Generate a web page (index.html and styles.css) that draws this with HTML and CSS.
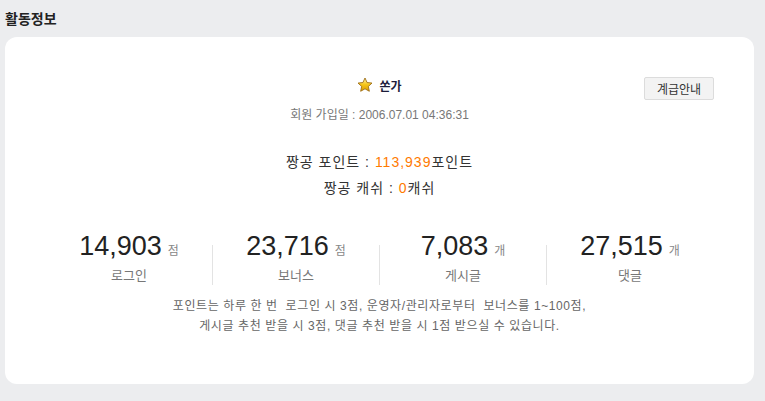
FILE: index.html
```html
<!DOCTYPE html>
<html lang="ko">
<head>
  <meta charset="UTF-8">
  <meta name="viewport" content="width=device-width, initial-scale=1.0">
  <title>활동정보</title>
  <link rel="stylesheet" href="styles.css">
</head>
<body>
  <h2 class="title">활동정보</h2>
  <div class="card">
    <button class="grade-btn" type="button">계급안내</button>
    <div class="name-row">
      <svg class="star" width="16" height="16" viewBox="0 0 24 24">
        <defs>
          <linearGradient id="g" x1="0" y1="0" x2="0" y2="1">
            <stop offset="0" stop-color="#fff6b0"/>
            <stop offset="0.5" stop-color="#f5c518"/>
            <stop offset="1" stop-color="#d99a00"/>
          </linearGradient>
        </defs>
        <path d="M12 1.5l3.1 6.8 7.4.8-5.5 5 1.5 7.3L12 17.7l-6.5 3.7 1.5-7.3-5.5-5 7.4-.8z" fill="url(#g)" stroke="#9a6a10" stroke-width="1.3" stroke-linejoin="round"/>
      </svg>
      <span class="nick">쏜가</span>
    </div>
    <p class="joined">회원 가입일 : 2006.07.01 04:36:31</p>
    <div class="wallet">
      <p>짱공 포인트 : <em>113,939</em>포인트</p>
      <p>짱공 캐쉬 : <em>0</em>캐쉬</p>
    </div>
    <div class="stats">
      <div class="stat">
        <div class="num">14,903<span class="unit">점</span></div>
        <div class="label">로그인</div>
      </div>
      <div class="sep"></div>
      <div class="stat">
        <div class="num">23,716<span class="unit">점</span></div>
        <div class="label">보너스</div>
      </div>
      <div class="sep"></div>
      <div class="stat">
        <div class="num">7,083<span class="unit">개</span></div>
        <div class="label">게시글</div>
      </div>
      <div class="sep"></div>
      <div class="stat">
        <div class="num">27,515<span class="unit">개</span></div>
        <div class="label">댓글</div>
      </div>
    </div>
    <p class="notice">포인트는 하루 한 번 &nbsp;로그인 시 3점, 운영자/관리자로부터 &nbsp;보너스를 1~100점,<br>게시글 추천 받을 시 3점, 댓글 추천 받을 시 1점 받으실 수 있습니다.</p>
  </div>
</body>
</html>
```

FILE: styles.css
```css
body {
  margin: 0;
  background: #ecedef;
  font-family: "Liberation Sans", "Noto Sans CJK KR", sans-serif;
  color: #333;
}

.title {
  margin: 0;
  padding: 9px 5px 8px;
  font-size: 14px;
  line-height: 20px;
  font-weight: bold;
  color: #222;
}

.card {
  position: relative;
  margin: 0 11px 0 5px;
  height: 347px;
  box-sizing: border-box;
  padding-top: 37px;
  background: #fff;
  border-radius: 12px;
  text-align: center;
}

.grade-btn {
  position: absolute;
  top: 40px;
  right: 40px;
  width: 70px;
  height: 23px;
  padding: 0;
  background: #f3f3f3;
  border: 1px solid #dcdcdc;
  border-radius: 2px;
  font-family: inherit;
  font-size: 12px;
  color: #333;
}

.name-row {
  display: flex;
  justify-content: center;
  align-items: center;
  gap: 6px;
  height: 22px;
}

.star {
  display: block;
}

.nick {
  font-size: 12px;
  font-weight: bold;
  color: #1c1c3a;
}

.joined {
  margin: 9px 0 0;
  font-size: 12px;
  line-height: 20px;
  color: #777;
}

.wallet {
  margin-top: 24px;
}

.wallet p {
  margin: 0;
  font-size: 14px;
  line-height: 26px;
  letter-spacing: 1px;
  color: #333;
}

.wallet em {
  font-style: normal;
  color: #ff7a00;
}

.stats {
  display: flex;
  align-items: flex-end;
  margin: 30px 41px 0;
}

.stat {
  flex: 1;
}

.sep {
  width: 1px;
  height: 40px;
  margin-bottom: 1px;
  background: #e3e3e3;
}

.num {
  font-size: 27px;
  line-height: 30px;
  color: #222;
}

.unit {
  margin-left: 6px;
  font-size: 12px;
  color: #888;
}

.label {
  font-size: 13px;
  line-height: 20px;
  color: #777;
}

.notice {
  margin: 10px 0 0;
  font-size: 12px;
  line-height: 20px;
  letter-spacing: 0.6px;
  color: #666;
}
```
